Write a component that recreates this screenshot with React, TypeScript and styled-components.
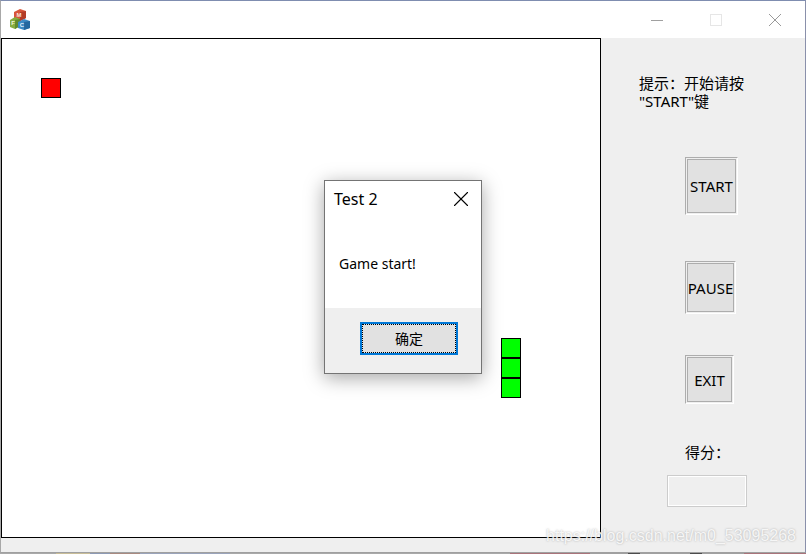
import styled, { createGlobalStyle } from "styled-components";
import { X } from "lucide-react";

const FONT = `"Noto Sans", "Noto Sans CJK SC", sans-serif`;

const GlobalStyle = createGlobalStyle`
  html, body {
    margin: 0;
    padding: 0;
    width: 806px;
    height: 554px;
    overflow: hidden;
    background: linear-gradient(
      90deg,
      #a9a9a9 0 56px,
      #c9bd98 56px 90px,
      #8d9ab5 90px 110px,
      #a98a80 110px 140px,
      #9aa4bb 140px 230px,
      #a9a9a9 230px 510px,
      #a9737a 510px 590px,
      #a0a0a0 590px 628px,
      #4b4b4b 628px 640px,
      #a0a0a0 640px 690px,
      #4b4b4b 690px 702px,
      #a0a0a0 702px 744px,
      #a9737a 744px
    );
  }
`;

const Frame = styled.div`
  box-sizing: border-box;
  width: 806px;
  height: 553px;
  border-top: 1px solid #7f8db0;
  border-right: 1px solid #8a90ab;
  border-bottom: 1px solid #a0a0a0;
  border-left: 1px solid #a8a8a8;
  background: #efefef;
  display: flex;
  flex-direction: column;
  position: relative;
  font-family: ${FONT};
  color: #000;
`;

const TitleBar = styled.div`
  height: 37px;
  flex: none;
  background: #fff;
  display: flex;
  align-items: center;
`;

const AppIcon = styled.svg`
  width: 20px;
  height: 21px;
  margin-left: 9px;
`;

const WindowControls = styled.div`
  margin-left: auto;
  display: flex;
  align-items: center;
  gap: 45px;
  padding-right: 23px;
`;

const ControlGlyph = styled.svg`
  width: 14px;
  height: 14px;
  display: block;
  fill: none;
`;

const Body = styled.div`
  flex: 1;
  display: flex;
  align-items: flex-start;
`;

const Board = styled.div`
  box-sizing: border-box;
  width: 600px;
  height: 500px;
  background: #fff;
  border: 1px solid #000;
  position: relative;
  flex: none;
`;

const Cell = styled.div<{ $x: number; $y: number; $color: string }>`
  box-sizing: border-box;
  position: absolute;
  left: ${(p) => p.$x}px;
  top: ${(p) => p.$y}px;
  width: 20px;
  height: 20px;
  background: ${(p) => p.$color};
  border: 1px solid #000;
`;

const Side = styled.div`
  flex: 1;
  display: flex;
  flex-direction: column;
  align-items: flex-start;
  padding: 36px 0 0 38px;
`;

const Hint = styled.div`
  width: 120px;
  font-size: 15px;
  line-height: 18px;
`;

const GameButton = styled.button<{ $w: number; $h: number; $mt: number }>`
  box-sizing: border-box;
  width: ${(p) => p.$w}px;
  height: ${(p) => p.$h}px;
  margin: ${(p) => p.$mt}px 0 0 46px;
  padding: 0;
  background: #e1e1e1;
  border: 1px solid;
  border-color: #adadad #fff #fff #adadad;
  box-shadow: inset 0 0 0 1px #efefef, inset 0 0 0 2px #adadad;
  font-family: ${FONT};
  font-size: 15px;
  color: #000;
`;

const ScoreLabel = styled.div`
  margin: 38px 0 0 46px;
  font-size: 15px;
  line-height: 20px;
`;

const ScoreBox = styled.div`
  box-sizing: border-box;
  width: 80px;
  height: 32px;
  margin: 13px 0 0 28px;
  border: 1px solid #cccccc;
  box-shadow: inset 0 0 0 1px #fff;
  background: #efefef;
`;

const Dialog = styled.div`
  box-sizing: border-box;
  position: absolute;
  left: 323px;
  top: 179px;
  width: 158px;
  height: 194px;
  background: #fff;
  border: 1px solid #747474;
  box-shadow: 0 4px 18px rgba(0, 0, 0, 0.35);
  display: flex;
  flex-direction: column;
`;

const DialogHead = styled.div`
  display: flex;
  align-items: center;
  justify-content: space-between;
  height: 36px;
  padding: 0 7px 0 9px;
  font-size: 16px;
`;

const DialogText = styled.div`
  flex: 1;
  padding: 37px 0 0 14px;
  font-size: 14px;
  line-height: 20px;
`;

const DialogFoot = styled.div`
  height: 65px;
  background: #efefef;
  display: flex;
  align-items: center;
  justify-content: center;
`;

const OkButton = styled.button`
  box-sizing: border-box;
  width: 98px;
  height: 33px;
  margin: -5px 0 0 12px;
  padding: 0;
  background: #e1e1e1;
  border: 2px solid #0078d7;
  outline: 1px dotted #000;
  outline-offset: -3px;
  font-family: ${FONT};
  font-size: 14px;
  color: #000;
`;

const Watermark = styled.div`
  position: absolute;
  right: 9px;
  bottom: 7px;
  font-family: "Liberation Sans", sans-serif;
  font-size: 16px;
  color: rgba(255, 255, 255, 0.85);
  text-shadow: 0 0 2px rgba(130, 130, 130, 0.65);
  white-space: nowrap;
`;

const snake = [
  { x: 499, y: 299 },
  { x: 499, y: 319 },
  { x: 499, y: 339 },
];

export default function App() {
  return (
    <>
      <GlobalStyle />
      <Frame>
        <TitleBar>
          <AppIcon viewBox="0 0 20 21">
            <path d="M4 3l6-3 6 2v7l-6 3-6-2z" fill="#d8553a" />
            <path d="M10 3l6-1v7l-6 3z" fill="#b23c28" />
            <path d="M0 11l5-3 5 2v7l-5 3-5-2z" fill="#86ac3f" />
            <path d="M5 11l5-1v7l-5 3z" fill="#5f8a2c" />
            <path d="M8 13l6-3 6 2v7l-6 2-6-2z" fill="#3c8ac4" />
            <path d="M14 13l6-1v7l-6 2z" fill="#24689f" />
            <text x="9" y="8" fontSize="6" fontWeight="700" fill="#fbe3dc" textAnchor="middle" fontFamily="Liberation Sans">M</text>
            <text x="3" y="16" fontSize="6" fontWeight="700" fill="#eef5dc" textAnchor="middle" fontFamily="Liberation Sans">F</text>
            <text x="12" y="18" fontSize="6" fontWeight="700" fill="#e2f0fa" textAnchor="middle" fontFamily="Liberation Sans">C</text>
          </AppIcon>
          <WindowControls>
            <ControlGlyph viewBox="0 0 14 14" stroke="#a0a0a0">
              <path d="M1 7.5h12" />
            </ControlGlyph>
            <ControlGlyph viewBox="0 0 14 14" stroke="#e6e6e6">
              <rect x="1.5" y="1.5" width="11" height="11" />
            </ControlGlyph>
            <ControlGlyph viewBox="0 0 14 14" stroke="#999">
              <path d="M1 1l12 12M13 1L1 13" />
            </ControlGlyph>
          </WindowControls>
        </TitleBar>
        <Body>
          <Board>
            <Cell $x={39} $y={39} $color="#ff0000" />
            {snake.map((c) => (
              <Cell key={c.y} $x={c.x} $y={c.y} $color="#00ff00" />
            ))}
          </Board>
          <Side>
            <Hint>提示：开始请按 "START"键</Hint>
            <GameButton $w={53} $h={58} $mt={47}>START</GameButton>
            <GameButton $w={51} $h={53} $mt={46}>PAUSE</GameButton>
            <GameButton $w={49} $h={49} $mt={41}>EXIT</GameButton>
            <ScoreLabel>得分：</ScoreLabel>
            <ScoreBox />
          </Side>
        </Body>
        <Dialog>
          <DialogHead>
            Test 2
            <X size={26} strokeWidth={1} />
          </DialogHead>
          <DialogText>Game start!</DialogText>
          <DialogFoot>
            <OkButton>确定</OkButton>
          </DialogFoot>
        </Dialog>
        <Watermark>https://blog.csdn.net/m0_53095268</Watermark>
      </Frame>
    </>
  );
}
